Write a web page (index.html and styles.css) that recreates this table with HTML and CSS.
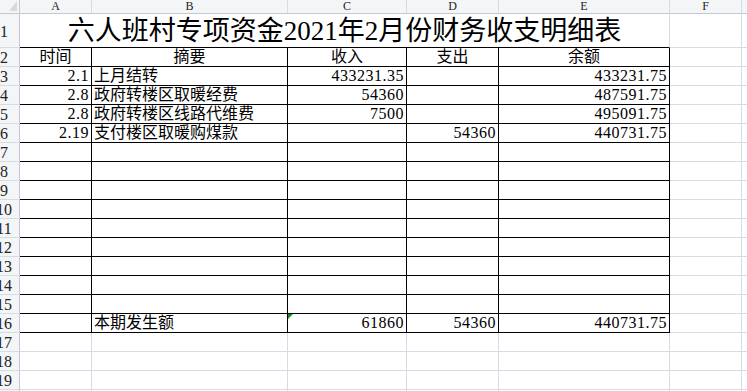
FILE: index.html
```html
<!DOCTYPE html>
<html lang="zh-CN">
<head>
<meta charset="utf-8">
<title>六人班村专项资金2021年2月份财务收支明细表</title>
<link rel="stylesheet" href="styles.css">
</head>
<body>
<div class="sheet">
  <!-- column headers -->
  <div class="corner"><svg class="corner-tri" width="8" height="10" viewBox="0 0 8 10"><polygon points="8,0 8,10 0,10" fill="#d9d9d9"/></svg></div>
  <div class="ch">A</div><div class="ch">B</div><div class="ch">C</div><div class="ch">D</div><div class="ch">E</div><div class="ch">F</div><div class="ch ch-last"></div>

  <!-- row 1 -->
  <div class="rh"><span>1</span></div>
  <div class="title">六人班村专项资金2021年2月份财务收支明细表</div>
  <div class="c"></div><div class="c g"></div>

  <!-- row 2 -->
  <div class="rh"><span>2</span></div>
  <div class="c t ctr">时间</div><div class="c t ctr">摘要</div><div class="c t ctr">收入</div><div class="c t ctr">支出</div><div class="c t ctr">余额</div>
  <div class="c"></div><div class="c g"></div>

  <!-- row 3 -->
  <div class="rh"><span>3</span></div>
  <div class="c t num">2.1</div><div class="c t txt">上月结转</div><div class="c t num">433231.35</div><div class="c t"></div><div class="c t num">433231.75</div>
  <div class="c"></div><div class="c g"></div>

  <!-- row 4 -->
  <div class="rh"><span>4</span></div>
  <div class="c t num">2.8</div><div class="c t txt">政府转楼区取暖经费</div><div class="c t num">54360</div><div class="c t"></div><div class="c t num">487591.75</div>
  <div class="c"></div><div class="c g"></div>

  <!-- row 5 -->
  <div class="rh"><span>5</span></div>
  <div class="c t num">2.8</div><div class="c t txt">政府转楼区线路代维费</div><div class="c t num">7500</div><div class="c t"></div><div class="c t num">495091.75</div>
  <div class="c"></div><div class="c g"></div>

  <!-- row 6 -->
  <div class="rh"><span>6</span></div>
  <div class="c t num">2.19</div><div class="c t txt">支付楼区取暖购煤款</div><div class="c t"></div><div class="c t num">54360</div><div class="c t num">440731.75</div>
  <div class="c"></div><div class="c g"></div>

  <!-- rows 7-15 -->
  <div class="rh"><span>7</span></div>
  <div class="c t"></div><div class="c t"></div><div class="c t"></div><div class="c t"></div><div class="c t"></div><div class="c"></div><div class="c g"></div>
  <div class="rh"><span>8</span></div>
  <div class="c t"></div><div class="c t"></div><div class="c t"></div><div class="c t"></div><div class="c t"></div><div class="c"></div><div class="c g"></div>
  <div class="rh"><span>9</span></div>
  <div class="c t"></div><div class="c t"></div><div class="c t"></div><div class="c t"></div><div class="c t"></div><div class="c"></div><div class="c g"></div>
  <div class="rh"><span>10</span></div>
  <div class="c t"></div><div class="c t"></div><div class="c t"></div><div class="c t"></div><div class="c t"></div><div class="c"></div><div class="c g"></div>
  <div class="rh"><span>11</span></div>
  <div class="c t"></div><div class="c t"></div><div class="c t"></div><div class="c t"></div><div class="c t"></div><div class="c"></div><div class="c g"></div>
  <div class="rh"><span>12</span></div>
  <div class="c t"></div><div class="c t"></div><div class="c t"></div><div class="c t"></div><div class="c t"></div><div class="c"></div><div class="c g"></div>
  <div class="rh"><span>13</span></div>
  <div class="c t"></div><div class="c t"></div><div class="c t"></div><div class="c t"></div><div class="c t"></div><div class="c"></div><div class="c g"></div>
  <div class="rh"><span>14</span></div>
  <div class="c t"></div><div class="c t"></div><div class="c t"></div><div class="c t"></div><div class="c t"></div><div class="c"></div><div class="c g"></div>
  <div class="rh"><span>15</span></div>
  <div class="c t"></div><div class="c t"></div><div class="c t"></div><div class="c t"></div><div class="c t"></div><div class="c"></div><div class="c g"></div>

  <!-- row 16 -->
  <div class="rh"><span>16</span></div>
  <div class="c t"></div><div class="c t txt">本期发生额</div><div class="c t num flagged">61860<i class="err"></i></div><div class="c t num">54360</div><div class="c t num">440731.75</div>
  <div class="c"></div><div class="c g"></div>

  <!-- rows 17-20 -->
  <div class="rh"><span>17</span></div>
  <div class="c"></div><div class="c"></div><div class="c"></div><div class="c"></div><div class="c"></div><div class="c"></div><div class="c g"></div>
  <div class="rh"><span>18</span></div>
  <div class="c"></div><div class="c"></div><div class="c"></div><div class="c"></div><div class="c"></div><div class="c"></div><div class="c g"></div>
  <div class="rh"><span>19</span></div>
  <div class="c"></div><div class="c"></div><div class="c"></div><div class="c"></div><div class="c"></div><div class="c"></div><div class="c g"></div>
  <div class="rh"><span>20</span></div>
  <div class="c"></div><div class="c"></div><div class="c"></div><div class="c"></div><div class="c"></div><div class="c"></div><div class="c g"></div>
</div>
</body>
</html>
```
FILE: styles.css
```css
html, body {
  margin: 0;
  padding: 0;
  background: #ffffff;
  overflow: hidden;
}

.sheet {
  display: grid;
  grid-template-columns: 20px 72px 196px 119px 92px 171px 72px 1fr;
  grid-template-rows: 14px 34px;
  grid-auto-rows: 19px;
  width: 747px;
  font-family: "Liberation Serif", "Noto Sans CJK SC", serif;
  color: #000;
}

.sheet > div {
  box-sizing: border-box;
  min-width: 0;
}

/* header corner */
.corner {
  background: #f4f5f7;
  border-right: 1px solid #c2c8d4;
  border-bottom: 1px solid #c2c8d4;
  display: flex;
  justify-content: flex-end;
  align-items: flex-end;
  padding: 0 2px 2px 0;
}
.corner-tri { display: block; }

/* column headers */
.ch {
  background: #f4f5f7;
  border-right: 1px solid #d5dae3;
  border-bottom: 1px solid #c2c8d4;
  font-size: 12px;
  line-height: 13px;
  text-align: center;
  color: #222;
}
.ch-last { border-right: none; }

/* row headers */
.rh {
  background: #f4f5f7;
  border-right: 1px solid #c2c8d4;
  border-bottom: 1px solid #d5dae3;
  overflow: hidden;
  display: flex;
  align-items: center;
}
.rh span {
  flex: none;
  display: block;
  width: 32px;
  margin-left: -12px;
  text-align: center;
  font-size: 16px;
  line-height: 16px;
  padding-top: 2px;
  color: #222;
}

/* cells */
.c {
  border-right: 1px solid #d5dae3;
  border-bottom: 1px solid #d5dae3;
  font-size: 16px;
  line-height: 16px;
  display: flex;
  align-items: flex-end;
  padding: 0 2px 1px 2px;
  white-space: nowrap;
}
.c.g { border-right: none; }

.t {
  border-right-color: #000;
  border-bottom-color: #000;
}

.ctr { justify-content: center; }
.num {
  justify-content: flex-end;
  letter-spacing: 0.5px;
}
.txt { justify-content: flex-start; }

.title {
  grid-column: span 5;
  border-right: 1px solid #d5dae3;
  border-bottom: 1px solid #000;
  font-size: 27px;
  line-height: 27px;
  display: flex;
  justify-content: center;
  align-items: flex-end;
  padding-bottom: 2px;
  white-space: nowrap;
}

.flagged { position: relative; }
.err {
  position: absolute;
  left: 0;
  top: 0;
  width: 0;
  height: 0;
  border-top: 5px solid #1a8a1a;
  border-right: 5px solid transparent;
}
```
